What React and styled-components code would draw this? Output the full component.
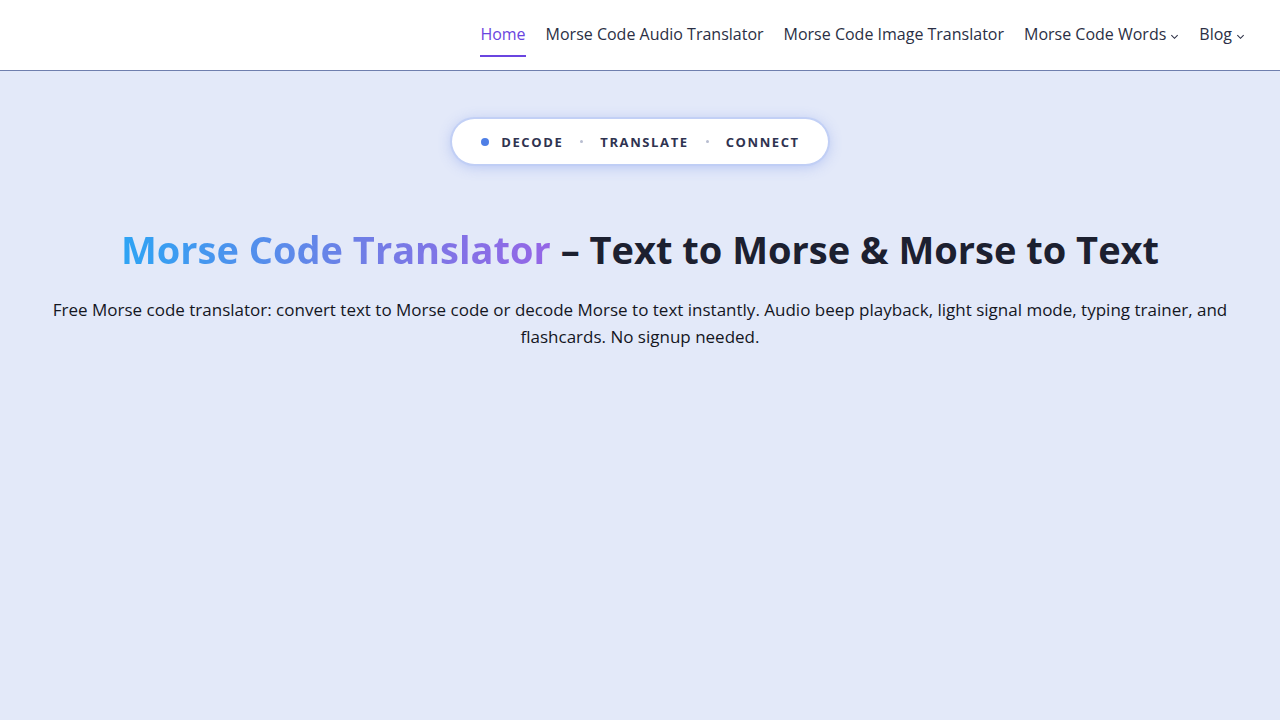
import React from 'react';
import styled, { createGlobalStyle } from 'styled-components';

const GlobalStyle = createGlobalStyle`
  html, body {
    margin: 0;
    padding: 0;
    background: #e3e9f9;
    font-family: "Open Sans", "Noto Sans", sans-serif;
  }
`;

const Page = styled.div`
  min-height: 720px;
  background: #e3e9f9;
`;

const Header = styled.header`
  height: 71px;
  background: #ffffff;
  border-bottom: 1px solid #6f7fae;
  display: flex;
  justify-content: flex-end;
  align-items: stretch;
  padding: 0 35px 0 0;
  box-sizing: border-box;
`;

const Nav = styled.nav`
  display: flex;
  align-items: stretch;
  gap: 20px;
`;

const NavItem = styled.a`
  position: relative;
  display: flex;
  align-items: center;
  gap: 4px;
  font-size: 16px;
  color: ${(p) => (p.active ? '#6a45e0' : '#2b2f45')};
  text-decoration: none;
  padding-bottom: 2px;

  &::after {
    content: '';
    display: ${(p) => (p.active ? 'block' : 'none')};
    position: absolute;
    left: 0;
    right: 0;
    bottom: 13px;
    height: 2px;
    background: #6a45e0;
  }
`;

const Chevron = () => (
  <svg width="9" height="9" viewBox="0 0 10 10" style={{ marginTop: 4 }}>
    <path d="M1.5 3.5 L5 7 L8.5 3.5" fill="none" stroke="#2b2f45" strokeWidth="1.2" />
  </svg>
);

const Hero = styled.main`
  display: flex;
  flex-direction: column;
  align-items: center;
  padding: 48px 40px 0;
`;

const Pill = styled.div`
  display: flex;
  align-items: center;
  gap: 17px;
  height: 45px;
  padding: 0 28px 0 29px;
  box-sizing: border-box;
  background: #ffffff;
  border-radius: 23px;
  box-shadow: 0 0 0 2px rgba(190, 205, 245, 0.8), 0 2px 14px rgba(110, 140, 235, 0.45);
`;

const Dot = styled.span`
  width: 8px;
  height: 8px;
  border-radius: 50%;
  background: #4f7fe6;
  margin-right: -5px;
`;

const Sep = styled.span`
  width: 3px;
  height: 3px;
  border-radius: 50%;
  background: #b8bdd0;
`;

const PillText = styled.span`
  font-size: 13px;
  font-weight: 700;
  letter-spacing: 1.6px;
  color: #2f3350;
`;

const Title = styled.h1`
  margin: 62px 0 0;
  font-size: 38px;
  line-height: 46px;
  font-weight: 700;
  color: #1c2030;
  text-align: center;
`;

const Grad = styled.span`
  background: linear-gradient(90deg, #2ea4f4 0%, #6f7fe6 55%, #9566e6 100%);
  -webkit-background-clip: text;
  background-clip: text;
  color: transparent;
`;

const Lead = styled.p`
  margin: 24px 0 0;
  font-size: 17px;
  line-height: 27px;
  color: #14161f;
  text-align: center;
  max-width: 1200px;
`;

export default function App() {
  return (
    <Page>
      <GlobalStyle />
      <Header>
        <Nav>
          <NavItem active>Home</NavItem>
          <NavItem>Morse Code Audio Translator</NavItem>
          <NavItem>Morse Code Image Translator</NavItem>
          <NavItem>
            Morse Code Words <Chevron />
          </NavItem>
          <NavItem>
            Blog <Chevron />
          </NavItem>
        </Nav>
      </Header>
      <Hero>
        <Pill>
          <Dot />
          <PillText>DECODE</PillText>
          <Sep />
          <PillText>TRANSLATE</PillText>
          <Sep />
          <PillText>CONNECT</PillText>
        </Pill>
        <Title>
          <Grad>Morse Code Translator</Grad> – Text to Morse &amp; Morse to Text
        </Title>
        <Lead>
          Free Morse code translator: convert text to Morse code or decode Morse to text instantly. Audio beep
          playback, light signal mode, typing trainer, and flashcards. No signup needed.
        </Lead>
      </Hero>
    </Page>
  );
}
